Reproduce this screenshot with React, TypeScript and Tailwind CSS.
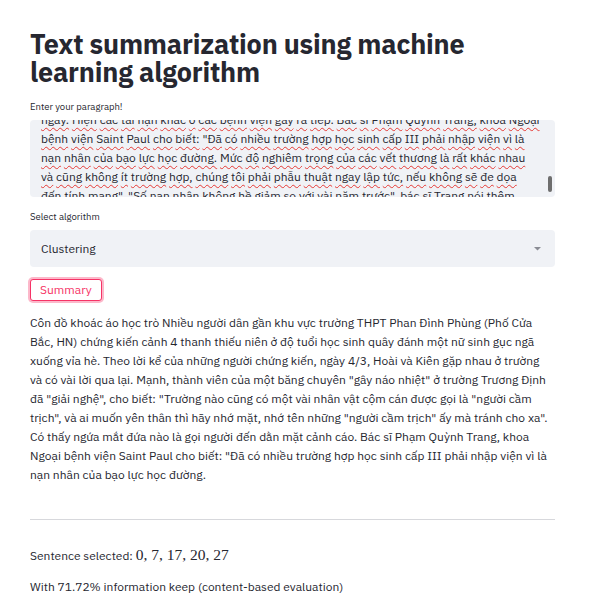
import React from "react";

const font = { fontFamily: '"IBM Plex Sans", "Noto Sans", "Open Sans", sans-serif' };
const mathFont = { fontFamily: '"Liberation Serif", "DejaVu Serif", serif' };

// textarea is scrolled: first and last rows are half hidden
const inputLines = [
  "ngày. Hiện các tai nạn khác ở các bệnh viện gây ra tiếp. Bác sĩ Phạm Quỳnh Trang, khoa Ngoại",
  "bệnh viện Saint Paul cho biết: \"Đã có nhiều trường hợp học sinh cấp III phải nhập viện vì là",
  "nạn nhân của bạo lực học đường. Mức độ nghiêm trọng của các vết thương là rất khác nhau",
  "và cũng không ít trường hợp, chúng tôi phải phẫu thuật ngay lập tức, nếu không sẽ đe dọa",
  "đến tính mạng\". \"Số nạn nhân không hề giảm so với vài năm trước\", bác sĩ Trang nói thêm.",
];

const summaryLines = [
  "Côn đồ khoác áo học trò Nhiều người dân gần khu vực trường THPT Phan Đình Phùng (Phố Cửa",
  "Bắc, HN) chứng kiến cảnh 4 thanh thiếu niên ở độ tuổi học sinh quây đánh một nữ sinh gục ngã",
  "xuống vỉa hè. Theo lời kể của những người chứng kiến, ngày 4/3, Hoài và Kiên gặp nhau ở trường",
  "và có vài lời qua lại. Mạnh, thành viên của một băng chuyên \"gây náo nhiệt\" ở trường Trương Định",
  "đã \"giải nghệ\", cho biết: \"Trường nào cũng có một vài nhân vật cộm cán được gọi là \"người cầm",
  "trịch\", và ai muốn yên thân thì hãy nhớ mặt, nhớ tên những \"người cầm trịch\" ấy mà tránh cho xa\".",
  "Có thấy ngứa mắt đứa nào là gọi người đến dằn mặt cảnh cáo. Bác sĩ Phạm Quỳnh Trang, khoa",
  "Ngoại bệnh viện Saint Paul cho biết: \"Đã có nhiều trường hợp học sinh cấp III phải nhập viện vì là",
  "nạn nhân của bạo lực học đường.",
];

function SpellLine({ text }: { text: string }) {
  const words = text.split(" ");
  return (
    <div>
      {words.map((w, i) => (
        <React.Fragment key={i}>
          <span className="underline decoration-wavy decoration-[#e53935] decoration-1 underline-offset-[3px]">{w}</span>
          {i < words.length - 1 ? " " : ""}
        </React.Fragment>
      ))}
    </div>
  );
}

export default function App() {
  return (
    <div className="min-h-screen bg-white text-[#262730]" style={font}>
      <div className="w-[525px] ml-[30px] pt-[30px]">
        <h1 className="text-[27px] leading-[28px] font-bold tracking-[-0.2px]">
          Text summarization using machine learning algorithm
        </h1>

        <div className="mt-[15px] text-[9.5px] leading-[12px]">Enter your paragraph!</div>
        <div className="relative mt-[7px] h-[77px] rounded bg-[#f0f2f6] overflow-hidden">
          <div className="-mt-[10.5px] pl-[11px] pr-[20px] text-[12px] leading-[19px] whitespace-nowrap">
            {inputLines.map((l, i) => (
              <SpellLine key={i} text={l} />
            ))}
          </div>
          <div className="absolute right-[3px] top-[56px] w-[4px] h-[16px] rounded-full bg-[#6e6e6e]" />
        </div>

        <div className="mt-[14px] text-[9.5px] leading-[12px]">Select algorithm</div>
        <div className="mt-[7px] h-[37px] rounded bg-[#f0f2f6] flex items-center justify-between pl-[11px] pr-[14px]">
          <span className="text-[12px]">Clustering</span>
          <svg width="7" height="4" viewBox="0 0 7 4">
            <path d="M0 0 L7 0 L3.5 3.5 Z" fill="#8a8c94" />
          </svg>
        </div>

        <button className="mt-[12px] h-[22px] px-[9px] rounded-[3px] border border-[#f63366] text-[#f63366] text-[12px] leading-none shadow-[0_0_0_2px_rgba(246,51,102,0.35)] bg-white">
          Summary
        </button>

        <div className="mt-[12px] text-[12px] leading-[19px] whitespace-nowrap">
          {summaryLines.map((l, i) => (
            <div key={i}>{l}</div>
          ))}
        </div>

        <hr className="mt-[35px] border-0 border-t border-[#d7d8dc]" />

        <div className="mt-[25px] flex items-baseline h-[19px] text-[12px] leading-[19px]">
          <span>Sentence selected:&nbsp;</span>
          <span className="text-[15.5px]" style={mathFont}>
            0, 7, 17, 20, 27
          </span>
        </div>
        <div className="mt-[13px] text-[12px] leading-[19px]">With 71.72% information keep (content-based evaluation)</div>
      </div>
    </div>
  );
}
